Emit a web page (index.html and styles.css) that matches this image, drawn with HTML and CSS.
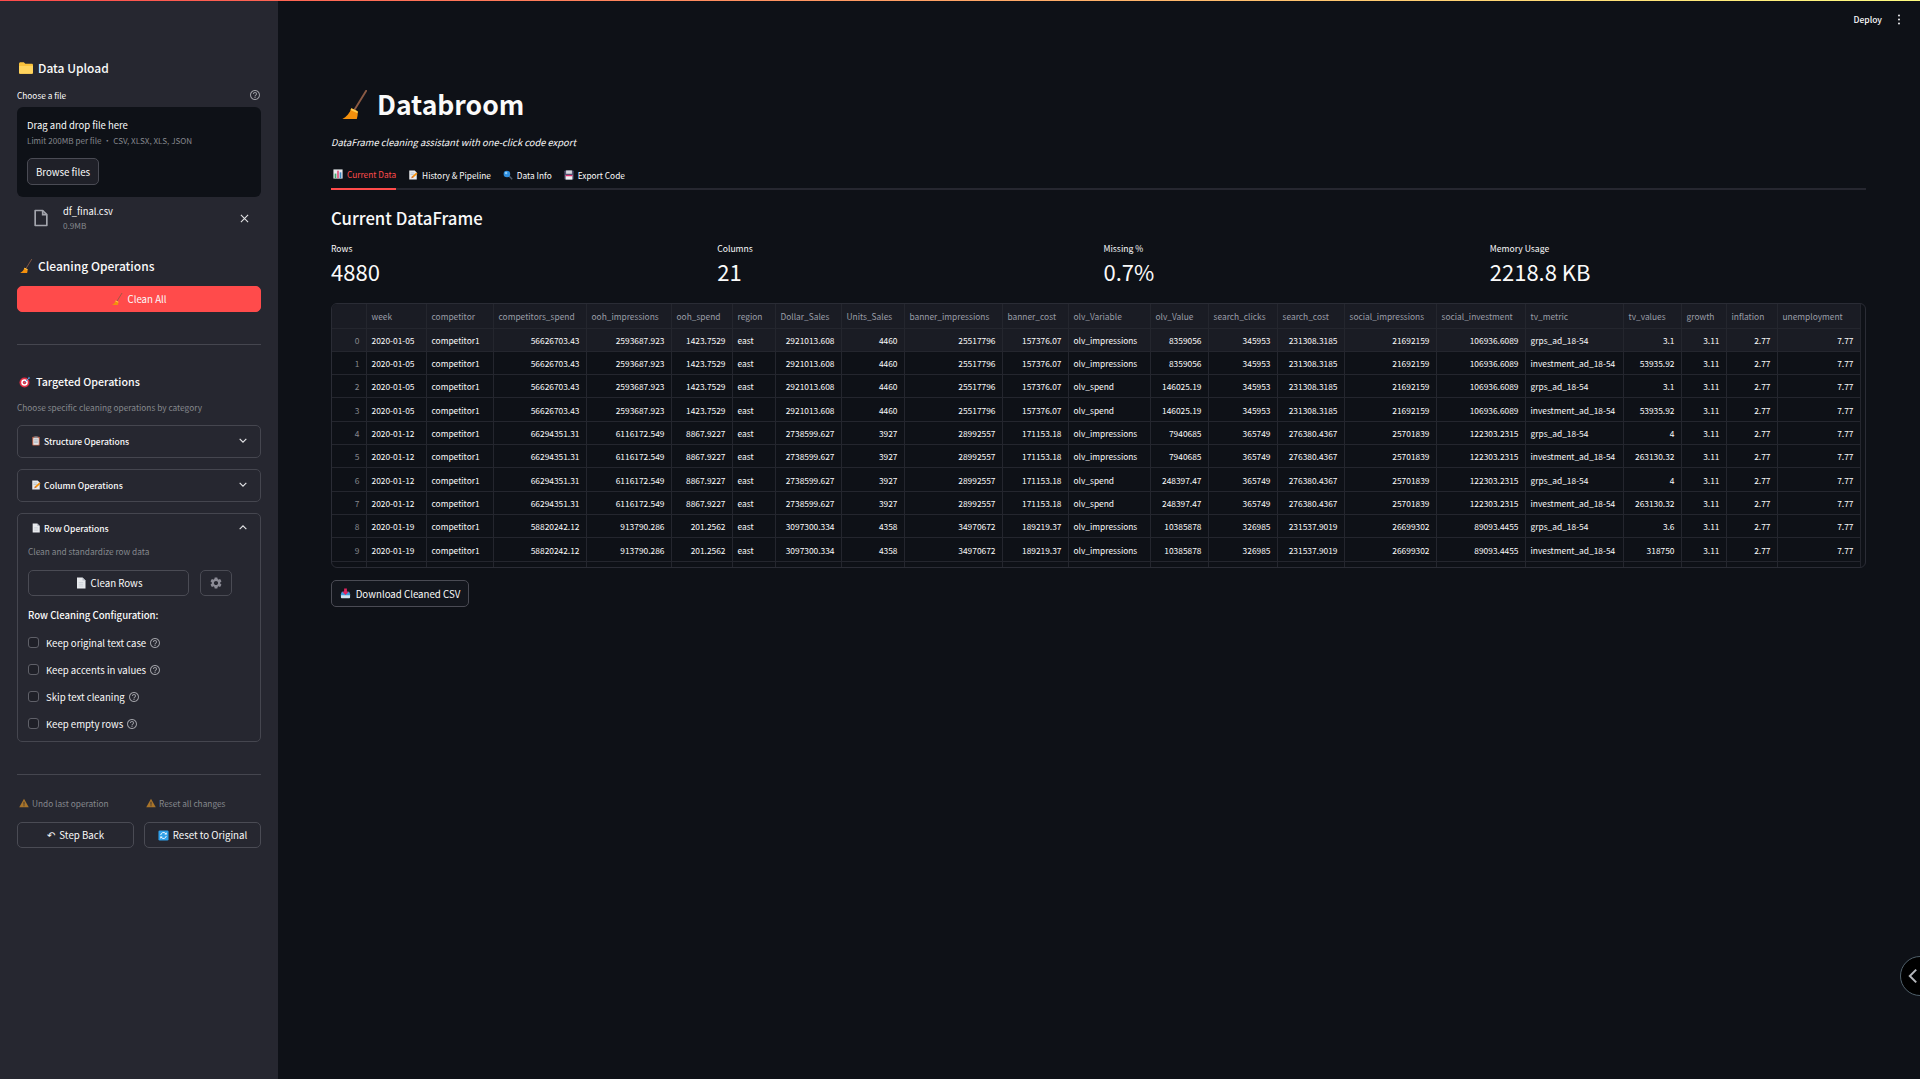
FILE: index.html
```html
<!DOCTYPE html>
<html lang="en">
<head>
<meta charset="UTF-8">
<meta name="viewport" content="width=device-width, initial-scale=1.0">
<title>Databroom</title>
<link rel="stylesheet" href="styles.css">
</head>
<body>

<svg class="sprite" xmlns="http://www.w3.org/2000/svg">
    <symbol id="i-broom" viewBox="0 0 24 28">
        <path d="M23.300.7 12 19" stroke="#8a5a44" stroke-width="1.800" stroke-linecap="round" fill="none"/>
        <path d="M9 17.500l6 3c.3 2.500 0 5-.8 7.500H.3C4 26 7.500 22.500 9 17.500z" fill="#f4900c"/>
        <path d="M9 17.500l6 3 .1 2-7-3.300z" fill="#ffcc4d"/>
    </symbol>
    <symbol id="i-folder" viewBox="1 3 22 19">
        <path d="M1 6c0-1.500 1-2.500 2.500-2.500h5L11 6h10c1.200 0 2 .8 2 2v11c0 1.500-1 2.500-2.500 2.500h-17C2 21.500 1 20.500 1 19z" fill="#f9c23c"/>
        <path d="M1 9.500h22V19c0 1.500-1 2.500-2.500 2.500h-17C2 21.500 1 20.500 1 19z" fill="#ffd45e"/>
    </symbol>
    <symbol id="i-target" viewBox="0 0 24 24">
        <circle cx="11" cy="13" r="10" fill="#dd2e44"/>
        <circle cx="11" cy="13" r="6.500" fill="#fff"/>
        <circle cx="11" cy="13" r="3.500" fill="#dd2e44"/>
        <path d="M11 13 21 3" stroke="#55acee" stroke-width="2"/>
        <path d="M19 1l1 3 3 1-3 1-2-2z" fill="#3b88c3"/>
    </symbol>
    <symbol id="i-clipboard" viewBox="0 0 24 24">
        <rect x="3" y="2" width="18" height="21" rx="2" fill="#c1694f"/>
        <rect x="5.500" y="5" width="13" height="16" fill="#e8eaed"/>
        <path d="M7.500 9h9M7.500 12.500h9M7.500 16h9" stroke="#8899a6" stroke-width="1.400"/>
        <rect x="8" y="1" width="8" height="4" fill="#8a8d94"/>
    </symbol>
    <symbol id="i-memo" viewBox="0 0 24 24">
        <path d="M3 1h13l5 5v17H3z" fill="#e8eaed"/>
        <path d="M6 7h9M6 11h8" stroke="#99aab5" stroke-width="1.400"/>
        <path d="M8 20l2-5 10-9 3 3-10 9z" fill="#f4900c"/>
        <path d="M8 20l2-5 3 3z" fill="#c1694f"/>
    </symbol>
    <symbol id="i-page" viewBox="0 0 24 24">
        <path d="M4 1h11l6 6v16H4z" fill="#e8eaed"/>
        <path d="M15 1l6 6h-6z" fill="#b8bcc6"/>
        <path d="M7.500 11h9M7.500 14.500h9M7.500 18h9" stroke="#c3c7d0" stroke-width="1.300"/>
    </symbol>
    <symbol id="i-file" viewBox="0 0 24 24">
        <path d="M5 3h9l5 5v13H5z" fill="none" stroke="#a3a5ad" stroke-width="2" stroke-linejoin="round"/>
        <path d="M14 3v5h5" fill="none" stroke="#a3a5ad" stroke-width="2"/>
    </symbol>
    <symbol id="i-help" viewBox="0 0 24 24">
        <path fill="currentColor" d="M11 18h2v-2h-2v2zm1-16C6.480 2 2 6.480 2 12s4.480 10 10 10 10-4.480 10-10S17.520 2 12 2zm0 18c-4.410 0-8-3.590-8-8s3.590-8 8-8 8 3.590 8 8-3.590 8-8 8zm0-14c-2.210 0-4 1.790-4 4h2c0-1.100.9-2 2-2s2 .9 2 2c0 2-3 1.750-3 5h2c0-2.250 3-2.500 3-5 0-2.210-1.790-4-4-4z"/>
    </symbol>
    <symbol id="i-gear" viewBox="0 0 24 24">
        <path fill="currentColor" d="M19.140 12.940c.04-.3.06-.61.06-.94 0-.32-.02-.64-.07-.94l2.030-1.580a.49.49 0 0 0 .12-.61l-1.920-3.320a.488.488 0 0 0-.59-.22l-2.390.96c-.5-.38-1.030-.7-1.620-.94l-.36-2.540a.484.484 0 0 0-.48-.41h-3.840c-.24 0-.43.17-.47.41l-.36 2.540c-.59.24-1.130.57-1.620.94l-2.390-.96c-.22-.08-.47 0-.59.22L2.740 8.870c-.12.21-.08.47.12.61l2.030 1.580c-.05.3-.09.63-.09.94s.02.64.07.94l-2.030 1.580a.49.49 0 0 0-.12.61l1.920 3.320c.12.22.37.29.59.22l2.390-.96c.5.38 1.030.7 1.620.94l.36 2.540c.05.24.24.41.48.41h3.840c.24 0 .44-.17.47-.41l.36-2.540c.59-.24 1.130-.56 1.620-.94l2.390.96c.22.08.47 0 .59-.22l1.920-3.320c.12-.22.07-.47-.12-.61l-2.010-1.580zM12 15.600c-1.980 0-3.600-1.620-3.600-3.600s1.620-3.600 3.600-3.600 3.600 1.620 3.600 3.600-1.620 3.600-3.600 3.600z"/>
    </symbol>
    <symbol id="i-warn" viewBox="0 0 24 24">
        <path d="M12 2 23.500 22H.5z" fill="#a8742a"/>
        <path d="M11 9h2v7h-2zM11 17.500h2v2h-2z" fill="#262730"/>
    </symbol>
    <symbol id="i-refresh" viewBox="0 0 24 24">
        <rect x="1" y="1" width="22" height="22" rx="3" fill="#2f9fe8"/>
        <path d="M6 11a6 6 0 0 1 10-4l2 2M18 13a6 6 0 0 1-10 4l-2-2" fill="none" stroke="#fff" stroke-width="2"/>
        <path d="M19 5v5h-5zM5 19v-5h5z" fill="#fff"/>
    </symbol>
    <symbol id="i-inbox" viewBox="0 0 24 24">
        <path d="M2 13h20v7c0 1.500-1 2.500-2.500 2.500h-15C3 22.500 2 21.500 2 20z" fill="#cfe2ef"/>
        <path d="M4 8h16l2 5v3H2v-3z" fill="#3b9ddd"/>
        <path d="M9 1h6v7h4l-7 7-7-7h4z" fill="#e0245e"/>
    </symbol>
    <symbol id="i-chart" viewBox="0 0 24 24">
        <rect x="1" y="1" width="22" height="22" fill="#e8eaed"/>
        <rect x="4" y="11" width="4" height="11" fill="#3fa66b"/>
        <rect x="10" y="4" width="4" height="18" fill="#e0507a"/>
        <rect x="16" y="8" width="4" height="14" fill="#3b88c3"/>
    </symbol>
    <symbol id="i-search" viewBox="0 0 24 24">
        <path d="M14 14l8 8" stroke="#55606e" stroke-width="3.500"/>
        <circle cx="9.500" cy="9.500" r="8" fill="#2f8fe0"/>
        <circle cx="7.500" cy="7" r="3" fill="#8ccaf5"/>
    </symbol>
    <symbol id="i-disk" viewBox="0 0 24 24">
        <rect x="1" y="1" width="22" height="22" rx="2" fill="#55516f"/>
        <rect x="5" y="1" width="14" height="8" fill="#d6d8de"/>
        <rect x="4" y="12" width="16" height="11" fill="#f2f3f5"/>
        <rect x="4" y="12" width="16" height="3" fill="#dd2e6b"/>
    </symbol>
</svg>

<div class="topline"></div>
<div class="toolbar">
    <span>Deploy</span>
    <svg class="dots" viewBox="0 0 4 14"><circle cx="2" cy="2" r="1.300"/><circle cx="2" cy="7" r="1.300"/><circle cx="2" cy="12" r="1.300"/></svg>
</div>
<button class="collapse">
    <svg viewBox="0 0 12 20"><path d="M10 2 2 10l8 8" fill="none" stroke="#b4b6bb" stroke-width="2.500"/></svg>
</button>

<div class="app">

    <aside class="sidebar">
        <h3 class="side-title"><svg class="ico-14"><use href="#i-folder"/></svg>Data Upload</h3>

        <div class="file-label">
            <span>Choose a file</span>
            <svg class="help"><use href="#i-help"/></svg>
        </div>
        <div class="dropzone">
            <div class="drop-main">Drag and drop file here</div>
            <div class="drop-sub">Limit 200MB per file • CSV, XLSX, XLS, JSON</div>
            <button class="btn browse">Browse files</button>
        </div>
        <div class="file-row">
            <svg class="file-ico"><use href="#i-file"/></svg>
            <div class="file-info">
                <div class="file-name">df_final.csv</div>
                <div class="file-size">0.9MB</div>
            </div>
            <svg class="file-x" viewBox="0 0 10 10"><path d="M1 1l8 8M9 1 1 9" stroke="#e4e4e6" stroke-width="1.200"/></svg>
        </div>

        <h3 class="side-title clean-title"><svg class="ico-14"><use href="#i-broom"/></svg>Cleaning Operations</h3>
        <button class="btn primary"><svg class="ico-12"><use href="#i-broom"/></svg>Clean All</button>

        <hr class="rule first-rule">

        <h4 class="side-sub"><svg class="ico-12"><use href="#i-target"/></svg>Targeted Operations</h4>
        <p class="muted pick">Choose specific cleaning operations by category</p>

        <div class="expander closed">
            <div class="exp-head"><span><svg class="ico-10"><use href="#i-clipboard"/></svg>Structure Operations</span>
                <svg class="chev" viewBox="0 0 12 8"><path d="M2 2l4 4 4-4" fill="none" stroke="#e4e4e6" stroke-width="1.400"/></svg></div>
        </div>
        <div class="expander closed">
            <div class="exp-head"><span><svg class="ico-10"><use href="#i-memo"/></svg>Column Operations</span>
                <svg class="chev" viewBox="0 0 12 8"><path d="M2 2l4 4 4-4" fill="none" stroke="#e4e4e6" stroke-width="1.400"/></svg></div>
        </div>
        <div class="expander open">
            <div class="exp-head"><span><svg class="ico-10"><use href="#i-page"/></svg>Row Operations</span>
                <svg class="chev" viewBox="0 0 12 8"><path d="M2 6l4-4 4 4" fill="none" stroke="#e4e4e6" stroke-width="1.400"/></svg></div>
            <div class="exp-body">
                <p class="muted">Clean and standardize row data</p>
                <div class="row-actions">
                    <button class="btn clean-rows"><svg class="ico-12"><use href="#i-page"/></svg>Clean Rows</button>
                    <button class="btn gear"><svg class="ico-14"><use href="#i-gear"/></svg></button>
                </div>
                <div class="config-title">Row Cleaning Configuration:</div>
                <label class="check"><span class="box"></span>Keep original text case<svg class="help"><use href="#i-help"/></svg></label>
                <label class="check"><span class="box"></span>Keep accents in values<svg class="help"><use href="#i-help"/></svg></label>
                <label class="check"><span class="box"></span>Skip text cleaning<svg class="help"><use href="#i-help"/></svg></label>
                <label class="check"><span class="box"></span>Keep empty rows<svg class="help"><use href="#i-help"/></svg></label>
            </div>
        </div>

        <hr class="rule second-rule">

        <div class="two-col warnings">
            <div class="warn"><svg class="ico-10"><use href="#i-warn"/></svg>Undo last operation</div>
            <div class="warn"><svg class="ico-10"><use href="#i-warn"/></svg>Reset all changes</div>
        </div>
        <div class="two-col side-buttons">
            <button class="btn"><span class="undo">↶</span> Step Back</button>
            <button class="btn"><svg class="ico-11"><use href="#i-refresh"/></svg>Reset to Original</button>
        </div>
    </aside>

    <main class="main">
        <h1 class="title"><svg class="title-ico"><use href="#i-broom"/></svg>Databroom</h1>
        <p class="tagline">DataFrame cleaning assistant with one-click code export</p>

        <div class="tabs">
            <div class="tab active"><svg class="ico-10"><use href="#i-chart"/></svg>Current Data</div>
            <div class="tab"><svg class="ico-10"><use href="#i-memo"/></svg>History &amp; Pipeline</div>
            <div class="tab"><svg class="ico-10"><use href="#i-search"/></svg>Data Info</div>
            <div class="tab"><svg class="ico-10"><use href="#i-disk"/></svg>Export Code</div>
        </div>

        <h2 class="section">Current DataFrame</h2>

        <div class="metrics">
            <div><div class="m-label">Rows</div><div class="m-value">4880</div></div>
            <div><div class="m-label">Columns</div><div class="m-value">21</div></div>
            <div><div class="m-label">Missing %</div><div class="m-value">0.7%</div></div>
            <div><div class="m-label">Memory Usage</div><div class="m-value">2218.8 KB</div></div>
        </div>

        <div class="table-wrap">
            <table class="df">
                <colgroup>
                    <col class="w34"><col class="w60"><col class="w67"><col class="w93"><col class="w85"><col class="w61"><col class="w43"><col class="w66"><col class="w63"><col class="w98"><col class="w66"><col class="w82"><col class="w58"><col class="w69"><col class="w67"><col class="w92"><col class="w89"><col class="w98"><col class="w58"><col class="w45"><col class="w51"><col class="w83">
                </colgroup>
                <thead>
                    <tr><th></th><th>week</th><th>competitor</th><th>competitors_spend</th><th>ooh_impressions</th><th>ooh_spend</th><th>region</th><th>Dollar_Sales</th><th>Units_Sales</th><th>banner_impressions</th><th>banner_cost</th><th>olv_Variable</th><th>olv_Value</th><th>search_clicks</th><th>search_cost</th><th>social_impressions</th><th>social_investment</th><th>tv_metric</th><th>tv_values</th><th>growth</th><th>inflation</th><th>unemployment</th></tr>
                </thead>
                <tbody>
                    <tr class="hover"><td class="ix">0</td><td>2020-01-05</td><td>competitor1</td><td class="n">56626703.43</td><td class="n">2593687.923</td><td class="n">1423.7529</td><td>east</td><td class="n">2921013.608</td><td class="n">4460</td><td class="n">25517796</td><td class="n">157376.07</td><td>olv_impressions</td><td class="n">8359056</td><td class="n">345953</td><td class="n">231308.3185</td><td class="n">21692159</td><td class="n">106936.6089</td><td>grps_ad_18-54</td><td class="n">3.1</td><td class="n">3.11</td><td class="n">2.77</td><td class="n">7.77</td></tr>
                    <tr><td class="ix">1</td><td>2020-01-05</td><td>competitor1</td><td class="n">56626703.43</td><td class="n">2593687.923</td><td class="n">1423.7529</td><td>east</td><td class="n">2921013.608</td><td class="n">4460</td><td class="n">25517796</td><td class="n">157376.07</td><td>olv_impressions</td><td class="n">8359056</td><td class="n">345953</td><td class="n">231308.3185</td><td class="n">21692159</td><td class="n">106936.6089</td><td>investment_ad_18-54</td><td class="n">53935.92</td><td class="n">3.11</td><td class="n">2.77</td><td class="n">7.77</td></tr>
                    <tr><td class="ix">2</td><td>2020-01-05</td><td>competitor1</td><td class="n">56626703.43</td><td class="n">2593687.923</td><td class="n">1423.7529</td><td>east</td><td class="n">2921013.608</td><td class="n">4460</td><td class="n">25517796</td><td class="n">157376.07</td><td>olv_spend</td><td class="n">146025.19</td><td class="n">345953</td><td class="n">231308.3185</td><td class="n">21692159</td><td class="n">106936.6089</td><td>grps_ad_18-54</td><td class="n">3.1</td><td class="n">3.11</td><td class="n">2.77</td><td class="n">7.77</td></tr>
                    <tr><td class="ix">3</td><td>2020-01-05</td><td>competitor1</td><td class="n">56626703.43</td><td class="n">2593687.923</td><td class="n">1423.7529</td><td>east</td><td class="n">2921013.608</td><td class="n">4460</td><td class="n">25517796</td><td class="n">157376.07</td><td>olv_spend</td><td class="n">146025.19</td><td class="n">345953</td><td class="n">231308.3185</td><td class="n">21692159</td><td class="n">106936.6089</td><td>investment_ad_18-54</td><td class="n">53935.92</td><td class="n">3.11</td><td class="n">2.77</td><td class="n">7.77</td></tr>
                    <tr><td class="ix">4</td><td>2020-01-12</td><td>competitor1</td><td class="n">66294351.31</td><td class="n">6116172.549</td><td class="n">8867.9227</td><td>east</td><td class="n">2738599.627</td><td class="n">3927</td><td class="n">28992557</td><td class="n">171153.18</td><td>olv_impressions</td><td class="n">7940685</td><td class="n">365749</td><td class="n">276380.4367</td><td class="n">25701839</td><td class="n">122303.2315</td><td>grps_ad_18-54</td><td class="n">4</td><td class="n">3.11</td><td class="n">2.77</td><td class="n">7.77</td></tr>
                    <tr><td class="ix">5</td><td>2020-01-12</td><td>competitor1</td><td class="n">66294351.31</td><td class="n">6116172.549</td><td class="n">8867.9227</td><td>east</td><td class="n">2738599.627</td><td class="n">3927</td><td class="n">28992557</td><td class="n">171153.18</td><td>olv_impressions</td><td class="n">7940685</td><td class="n">365749</td><td class="n">276380.4367</td><td class="n">25701839</td><td class="n">122303.2315</td><td>investment_ad_18-54</td><td class="n">263130.32</td><td class="n">3.11</td><td class="n">2.77</td><td class="n">7.77</td></tr>
                    <tr><td class="ix">6</td><td>2020-01-12</td><td>competitor1</td><td class="n">66294351.31</td><td class="n">6116172.549</td><td class="n">8867.9227</td><td>east</td><td class="n">2738599.627</td><td class="n">3927</td><td class="n">28992557</td><td class="n">171153.18</td><td>olv_spend</td><td class="n">248397.47</td><td class="n">365749</td><td class="n">276380.4367</td><td class="n">25701839</td><td class="n">122303.2315</td><td>grps_ad_18-54</td><td class="n">4</td><td class="n">3.11</td><td class="n">2.77</td><td class="n">7.77</td></tr>
                    <tr><td class="ix">7</td><td>2020-01-12</td><td>competitor1</td><td class="n">66294351.31</td><td class="n">6116172.549</td><td class="n">8867.9227</td><td>east</td><td class="n">2738599.627</td><td class="n">3927</td><td class="n">28992557</td><td class="n">171153.18</td><td>olv_spend</td><td class="n">248397.47</td><td class="n">365749</td><td class="n">276380.4367</td><td class="n">25701839</td><td class="n">122303.2315</td><td>investment_ad_18-54</td><td class="n">263130.32</td><td class="n">3.11</td><td class="n">2.77</td><td class="n">7.77</td></tr>
                    <tr><td class="ix">8</td><td>2020-01-19</td><td>competitor1</td><td class="n">58820242.12</td><td class="n">913790.286</td><td class="n">201.2562</td><td>east</td><td class="n">3097300.334</td><td class="n">4358</td><td class="n">34970672</td><td class="n">189219.37</td><td>olv_impressions</td><td class="n">10385878</td><td class="n">326985</td><td class="n">231537.9019</td><td class="n">26699302</td><td class="n">89093.4455</td><td>grps_ad_18-54</td><td class="n">3.6</td><td class="n">3.11</td><td class="n">2.77</td><td class="n">7.77</td></tr>
                    <tr><td class="ix">9</td><td>2020-01-19</td><td>competitor1</td><td class="n">58820242.12</td><td class="n">913790.286</td><td class="n">201.2562</td><td>east</td><td class="n">3097300.334</td><td class="n">4358</td><td class="n">34970672</td><td class="n">189219.37</td><td>olv_impressions</td><td class="n">10385878</td><td class="n">326985</td><td class="n">231537.9019</td><td class="n">26699302</td><td class="n">89093.4455</td><td>investment_ad_18-54</td><td class="n">318750</td><td class="n">3.11</td><td class="n">2.77</td><td class="n">7.77</td></tr>
                    <tr class="cut"><td></td><td></td><td></td><td></td><td></td><td></td><td></td><td></td><td></td><td></td><td></td><td></td><td></td><td></td><td></td><td></td><td></td><td></td><td></td><td></td><td></td><td></td></tr>
                </tbody>
            </table>
        </div>

        <button class="btn download"><svg class="ico-11"><use href="#i-inbox"/></svg>Download Cleaned CSV</button>
    </main>

</div>

</body>
</html>
```

FILE: styles.css
```css
* {
    box-sizing: border-box;
}
body {
    margin: 0;
    height: 1079px;
    overflow: hidden;
    position: relative;
    background-color: #0e1117;
    color: #fafafa;
    font-family: "Noto Sans CJK SC", "Noto Sans", sans-serif;
    font-size: 10px;
}
h1, h2, h3, h4, p {
    margin: 0;
}
svg {
    flex: none;
}
.sprite {
    display: none;
}
.topline {
    position: absolute;
    top: 0;
    left: 0;
    right: 0;
    height: 1px;
    background: linear-gradient(90deg, #ff4b4b, #fffd80);
}
.toolbar {
    position: absolute;
    top: 12px;
    right: 19px;
    display: flex;
    align-items: center;
    gap: 15px;
    font-size: 8.5px;
    font-weight: 500;
    line-height: 14px;
}
.dots {
    width: 4px;
    height: 11px;
    fill: #e6e6e8;
}
.collapse {
    position: absolute;
    top: 956px;
    left: 1900px;
    width: 40px;
    height: 40px;
    padding: 0 0 0 7px;
    border-radius: 50%;
    border: 1px solid #50606a;
    background-color: #000;
    display: flex;
    align-items: center;
}
.collapse svg {
    width: 10px;
    height: 16px;
}

.app {
    display: flex;
    height: 100%;
}

/* sidebar */
.sidebar {
    width: 278px;
    flex: none;
    background-color: #262730;
    padding: 58px 17px 0;
}
.side-title {
    display: flex;
    align-items: center;
    gap: 5px;
    font-size: 12px;
    font-weight: 500;
    line-height: 20px;
    padding-left: 2px;
}
.ico-10 { width: 10px; height: 10px; }
.ico-11 { width: 11px; height: 11px; }
.ico-12 { width: 12px; height: 12px; }
.ico-14 { width: 14px; height: 14px; }
.help {
    width: 12px;
    height: 12px;
    color: #9a9ba1;
}
.file-label {
    display: flex;
    justify-content: space-between;
    align-items: center;
    margin-top: 10px;
    font-size: 8.3px;
    line-height: 14px;
}
.dropzone {
    margin-top: 5px;
    height: 90px;
    padding: 11px 10px;
    background-color: #0e1117;
    border-radius: 6px;
}
.drop-main {
    font-size: 9.5px;
    line-height: 14px;
}
.drop-sub {
    margin-top: 2px;
    font-size: 8.1px;
    line-height: 14px;
    color: #85878d;
}
.btn {
    display: flex;
    align-items: center;
    justify-content: center;
    gap: 4px;
    height: 26px;
    padding: 0;
    font-family: inherit;
    font-size: 9.7px;
    color: #fafafa;
    background-color: #262730;
    border: 1px solid #4a4b54;
    border-radius: 5px;
}
.browse {
    width: 72px;
    height: 27px;
    margin-top: 10px;
    background-color: #1f2028;
}
.file-row {
    display: flex;
    align-items: center;
    height: 40px;
    padding: 2px 12px 0 14px;
}
.file-ico {
    width: 20px;
    height: 20px;
}
.file-info {
    flex: 1;
    margin-left: 12px;
}
.file-name {
    font-size: 9.4px;
    line-height: 14px;
}
.file-size {
    margin-top: 1px;
    font-size: 8.2px;
    line-height: 13px;
    color: #85878d;
}
.file-x {
    width: 9px;
    height: 9px;
}
.clean-title {
    margin-top: 19px;
}
.primary {
    width: 100%;
    margin-top: 10px;
    background-color: #ff4b4b;
    border-color: #ff4b4b;
}
.rule {
    height: 1px;
    margin: 0;
    border: 0;
    background-color: #45464f;
}
.first-rule {
    margin-top: 32px;
}
.side-sub {
    display: flex;
    align-items: center;
    gap: 5px;
    margin-top: 27px;
    padding-left: 2px;
    font-size: 10.7px;
    font-weight: 500;
    line-height: 20px;
}
.muted {
    font-size: 8.3px;
    line-height: 14px;
    color: #85878d;
}
.pick {
    margin-top: 8px;
}
.expander {
    margin-top: 11px;
    border: 1px solid #45464f;
    border-radius: 5px;
}
.expander.closed {
    height: 33px;
}
.expander.open {
    height: 229px;
}
.exp-head {
    display: flex;
    align-items: center;
    justify-content: space-between;
    height: 29px;
    padding: 0 12px 0 13px;
    font-size: 8.5px;
    font-weight: 500;
}
.open .exp-head {
    height: 27px;
}
.exp-head span {
    display: flex;
    align-items: center;
    gap: 3px;
}
.chev {
    width: 10px;
    height: 7px;
}
.exp-body {
    padding: 3px 10px 0;
}
.row-actions {
    display: flex;
    gap: 11px;
    margin-top: 12px;
}
.clean-rows {
    width: 161px;
}
.gear {
    width: 32px;
    color: #8c8c96;
}
.config-title {
    margin-top: 12px;
    font-size: 9.6px;
    font-weight: 500;
    line-height: 14px;
}
.check {
    display: flex;
    align-items: center;
    height: 27px;
    font-size: 9.6px;
}
.config-title + .check {
    margin-top: 7px;
}
.box {
    width: 11px;
    height: 11px;
    margin-right: 7px;
    border: 1px solid #5f6068;
    border-radius: 3px;
    background-color: #1f2028;
}
.check .help {
    margin-left: 3px;
}
.second-rule {
    margin-top: 32px;
}
.two-col {
    display: grid;
    grid-template-columns: 1fr 1fr;
    gap: 10px;
}
.warnings {
    margin-top: 21px;
}
.warn {
    display: flex;
    align-items: center;
    gap: 3px;
    padding-left: 2px;
    font-size: 8.3px;
    line-height: 14px;
    color: #85878d;
}
.side-buttons {
    margin-top: 12px;
}
.undo {
    font-family: "DejaVu Sans", sans-serif;
    font-size: 10px;
}

/* main area */
.main {
    flex: 1;
    min-width: 0;
    padding: 82px 54px 0 53px;
}
.title {
    display: flex;
    align-items: center;
    height: 44px;
    padding-left: 11px;
    font-size: 26.5px;
    font-weight: 700;
    line-height: 44px;
}
.title-ico {
    width: 25px;
    height: 29px;
    margin-right: 10px;
}
.tagline {
    margin-top: 8px;
    font-size: 9.4px;
    font-style: italic;
    line-height: 16px;
}
.tabs {
    display: flex;
    gap: 10px;
    height: 31px;
    margin-top: 9px;
    border-bottom: 2px solid #262730;
}
.tab {
    display: flex;
    align-items: center;
    gap: 4px;
    height: 31px;
    padding: 0 0 0 2px;
    font-size: 8.3px;
}
.tab.active {
    color: #ff4b4b;
    border-bottom: 2px solid #ff4b4b;
}
.section {
    margin-top: 14px;
    font-size: 16.7px;
    font-weight: 500;
    line-height: 28px;
}
.metrics {
    display: grid;
    grid-template-columns: repeat(4, 1fr);
    gap: 10px;
    margin-top: 9px;
}
.m-label {
    font-size: 8.6px;
    line-height: 14px;
}
.m-value {
    margin-top: 1px;
    font-size: 22px;
    line-height: 30px;
}
.table-wrap {
    height: 265px;
    margin-top: 17px;
    border: 1px solid #2a2c35;
    border-radius: 6px;
    overflow: hidden;
}
.df {
    width: 1527px;
    table-layout: fixed;
    border-collapse: collapse;
    font-size: 8.4px;
}
.w34 { width: 34px; } .w43 { width: 43px; } .w45 { width: 45px; } .w51 { width: 51px; }
.w58 { width: 58px; } .w60 { width: 60px; } .w61 { width: 61px; } .w63 { width: 63px; }
.w66 { width: 66px; } .w67 { width: 67px; } .w69 { width: 69px; } .w82 { width: 82px; }
.w83 { width: 83px; } .w85 { width: 85px; } .w89 { width: 89px; } .w92 { width: 92px; }
.w93 { width: 93px; } .w98 { width: 98px; }
.df th, .df td {
    padding: 0 6px 0 5px;
    border: 1px solid #24262e;
    white-space: nowrap;
    overflow: hidden;
}
.df tr > :first-child {
    border-left: 0;
}
.df thead tr {
    height: 24px;
}
.df th {
    font-weight: 400;
    text-align: left;
    color: #9a9ea8;
    background-color: #1a1c24;
    border-top: 0;
}
.df tbody tr {
    height: 23.33px;
}
.df .hover td {
    background-color: #1a1c24;
}
.df .n {
    text-align: right;
}
.df .ix {
    text-align: right;
    color: #85878d;
}
.df tbody .cut {
    height: 8px;
}
.download {
    width: 138px;
    height: 27px;
    margin-top: 12px;
    background-color: #13161d;
    gap: 5px;
}
```
